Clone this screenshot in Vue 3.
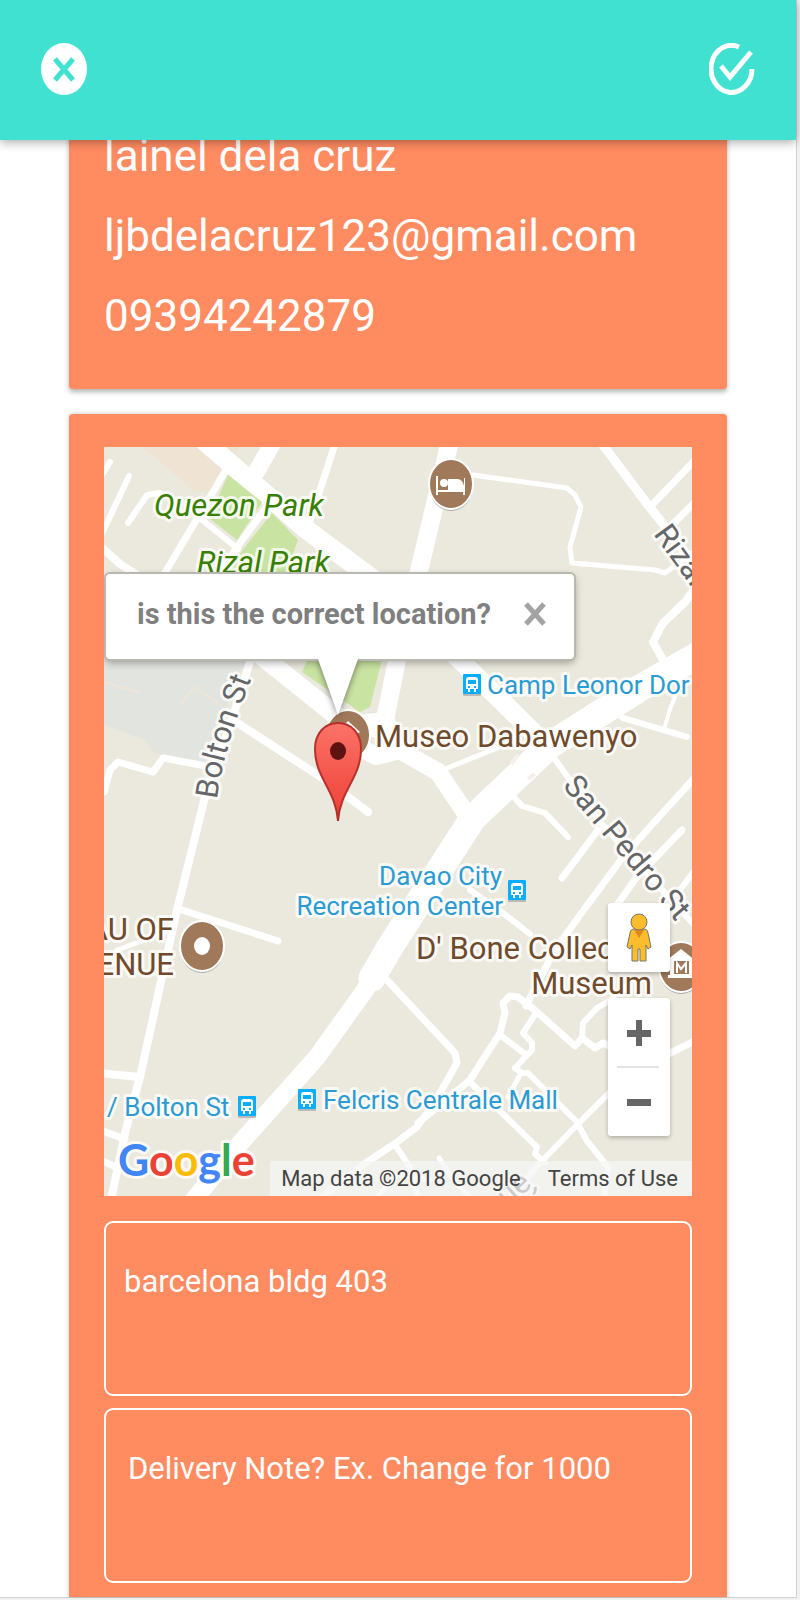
<script setup>
import { ref } from 'vue'

const address = ref('barcelona bldg 403')
const note = ref('')
const popupOpen = ref(true)

const customer = ['lainel dela cruz', 'ljbdelacruz123@gmail.com', '09394242879']

const roads = [
  { w: 19, d: 'M204 441 L267 495 L303 527 L373 579 L460 660 L538 737' },
  { w: 17, d: 'M274 441 L255 474' },
  { w: 7, d: 'M226 470 L163 576' },
  { w: 7, d: 'M268 505 L237 547 L216 578' },
  { w: 7, d: 'M336 441 L308 527' },
  { w: 6, d: 'M110 462 L100 478' },
  { w: 6, d: 'M129 476 L100 538' },
  { w: 6, d: 'M160 493 L147 495 L128 523' },
  { w: 6, d: 'M200 518 L238 549' },
  { w: 8, d: 'M100 546 L120 564 L142 578' },
  { w: 19, d: 'M258 653 L338 717 L352 740' },
  { w: 7, d: 'M104 792 L110 770 L118 762 L153 772 L163 758 L206 766' },
  { w: 8, d: 'M253 652 L232 720 L205 797 L177 910 L162 977 L140 1077 L125 1133 L111 1200' },
  { w: 8, d: 'M233 720 L330 783 L368 812' },
  { w: 18, d: 'M450 441 L420 567 L397 660 L383 730' },
  { w: 24, d: 'M352 728 L384 724' },
  { w: 18, d: 'M350 742 L376 756 L400 750 L438 772 L467 815' },
  { w: 14, d: 'M385 728 L398 748' },
  { w: 27, d: 'M700 654 L640 688 L550 745 L473 818 L433 880 L390 947 L372 978' },
  { w: 18, d: 'M380 965 L365 990 L317 1057 L243 1140 L192 1202' },
  { w: 5, d: 'M473 475 L567 488 L575 495 L581 507 L570 547 L572 563 L655 570 L665 573 L692 553' },
  { w: 9, d: 'M600 441 L648 505 L667 529 L692 562' },
  { w: 7, d: 'M698 457 L650 507' },
  { w: 7, d: 'M696 501 L668 529' },
  { w: 8, d: 'M697 585 L685 602 L663 623 L653 642 L662 658' },
  { w: 6, d: 'M611 709 L623 718 L687 737' },
  { w: 4, d: 'M675 697 L670 709 L665 726' },
  { w: 5, d: 'M445 769 L497 748' },
  { w: 6, d: 'M513 796 L522 806 L545 813 L568 837' },
  { w: 6, d: 'M552 755 L600 822 L652 879 L697 928' },
  { w: 7, d: 'M700 772 L667 808 L623 857 L580 915 L553 953 L526 1006' },
  { w: 7, d: 'M682 830 L636 878 L617 905' },
  { w: 7, d: 'M598 830 L562 878' },
  { w: 6, d: 'M698 866 L677 894' },
  { w: 6, d: 'M470 890 L503 913 L530 934' },
  { w: 7, d: 'M386 979 L455 1053 L457 1063 L433 1105 L417 1127 L393 1145 L367 1162 L318 1200' },
  { w: 6, d: 'M395 1145 L410 1167 L418 1198' },
  { w: 7, d: 'M418 1123 L470 1080 L500 1033 L505 1013 L503 1003 L510 996 L518 997 L537 1012 L575 1046 L582 1038 L595 1048 L603 1043 L618 1050' },
  { w: 6, d: 'M582 1040 L583 1023 L597 1008 L614 998' },
  { w: 6, d: 'M536 1013 L523 1033 L532 1043 L532 1050 L515 1068 L522 1073 L528 1073 L577 1122 L587 1141 L608 1167 L604 1198' },
  { w: 6, d: 'M500 1035 L525 1054' },
  { w: 5, d: 'M521 1073 L508 1097' },
  { w: 6, d: 'M469 1081 L537 1147 L535 1154 L545 1163' },
  { w: 6, d: 'M614 1088 L577 1125 L540 1163 L508 1200' },
  { w: 7, d: 'M664 1056 L697 1040' },
  { w: 8, d: 'M100 1073 L139 1077' },
  { w: 7, d: 'M100 1130 L125 1139' },
  { w: 7, d: 'M100 1160 L116 1167' },
  { w: 7, d: 'M182 910 L278 941' },
  { w: 5, d: 'M172 930 L117 950' },
  { w: 5, d: 'M439 1158 L450 1175 L470 1198' },
  { w: 5, d: 'M376 1198 L398 1174 L430 1180' }
]

const stops = [
  { x: 463, y: 674 },
  { x: 508, y: 880 },
  { x: 238, y: 1096 },
  { x: 298, y: 1089 }
]
</script>

<template>
  <div class="page">
    <header class="bar">
      <button class="icon-btn" type="button" aria-label="Close">
        <svg width="46" height="52" viewBox="0 0 46 52">
          <ellipse cx="23" cy="26" rx="23" ry="26" fill="#fff" />
          <path d="M14 16 L32 37 M32 16 L14 37" stroke="#40e1d1" stroke-width="5" />
        </svg>
      </button>
      <button class="icon-btn" type="button" aria-label="Confirm">
        <svg width="46" height="52" viewBox="0 0 46 52" fill="none" stroke="#fff" stroke-width="5">
          <path d="M30 4 A20.500 23.500 0 1 0 43 26" />
          <path d="M12 23 L21 34 L42 9" />
        </svg>
      </button>
    </header>

    <main class="content">
      <section class="card contact">
        <p v-for="line in customer" :key="line">{{ line }}</p>
      </section>

      <section class="card delivery">
        <div class="map">
          <svg class="tiles" viewBox="104 447 588 749" preserveAspectRatio="xMidYMid slice" role="img" aria-label="Map">
            <defs>
              <linearGradient id="pin" x1="0" y1="0" x2="0" y2="1">
                <stop offset="0" stop-color="#fc7267" />
                <stop offset="1" stop-color="#ee3f36" />
              </linearGradient>
              <path id="bolton" d="M217 799 Q224 745 257 665" />
            </defs>
            <rect x="104" y="447" width="588" height="749" fill="#ebe9de" />
            <path d="M143 447 H197 L223 472 L207 494 L193 490 Z M226 447 H240 L236 454 Z" fill="#efe4d4" />
            <path d="M104 655 H248 L240 672 L205 765 L163 755 L154 752 L145 740 L104 725 Z" fill="#e2e4df" />
            <path d="M104 682 L140 693 M180 705 L195 687 L222 706" stroke="#ede6d8" stroke-width="2" fill="none" />
            <g fill="none" stroke="#fff" stroke-linecap="round" stroke-linejoin="round">
              <path v-for="road in roads" :key="road.d" :d="road.d" :stroke-width="road.w" />
            </g>
            <g fill="#c9e3a2">
              <path d="M228 475 L262 502 L237 540 L209 518 Z" />
              <path d="M272 513 L298 540 L284 578 H226 L244 548 Z" />
              <path d="M310 655 H383 L370 707 L360 712 L302 672 Z" />
            </g>
            <path d="M511 764 L518 755 M528 779 L535 774" stroke="#f6f0ec" stroke-width="4" />

            <g v-for="stop in stops" :key="stop.x" :transform="`translate(${stop.x} ${stop.y})`">
              <rect y="1" width="18" height="21" rx="1" fill="#b9b9b5" />
              <rect width="18" height="20" rx="1" fill="#0aaeff" />
              <path d="M3 6 Q3 3 6 3 H12 Q15 3 15 6 V15 H13 V18 H11 V15 H7 V18 H5 V15 H3 Z" fill="#fff" />
              <path d="M5 6 H13 V10 H5 Z M5 12 H7 V14 H5 Z M11 12 H13 V14 H11 Z" fill="#0aaeff" />
            </g>

            <g stroke="#fff" stroke-width="2" fill="#a0785a">
              <ellipse cx="451" cy="486" rx="22" ry="25" fill="#aaa" stroke="none" />
              <ellipse cx="451" cy="484" rx="22" ry="25" />
              <ellipse cx="348" cy="735" rx="22" ry="25" />
              <ellipse cx="202" cy="948" rx="22" ry="25" fill="#aaa" stroke="none" />
              <ellipse cx="202" cy="946" rx="22" ry="25" />
              <ellipse cx="681" cy="969" rx="22" ry="25" fill="#aaa" stroke="none" />
              <ellipse cx="681" cy="967" rx="22" ry="25" />
            </g>
            <ellipse cx="202" cy="946" rx="8" ry="9" fill="#fff" />
            <path d="M436 476 H438 V490 H448 V479 H458 Q463 480 464 486 V478 H465 V495 H463 V492 H438 V495 H436 Z M440 483 a4 4 0 1 0 8 0 a4 4 0 1 0 -8 0" fill="#fff" />
            <path d="M334 735 L348 721 L360 732 L357 734 L348 727 Z" fill="#fff" />
            <path d="M667 960 L681 949 L695 960 V975 H697 V978 H668 V975 H670 V961 Z" fill="#fff" />
            <path d="M674 961 H689 V974 H674 Z" fill="#a0785a" />
            <path d="M677 973 V963 L681 969 L686 963 V973" fill="none" stroke="#fff" stroke-width="2" />

            <g class="label park">
              <text x="154" y="516">Quezon Park</text>
              <text x="197" y="573">Rizal Park</text>
            </g>
            <g class="label place">
              <text x="375" y="747">Museo Dabawenyo</text>
              <text x="416" y="959">D' Bone Collec</text>
              <text x="652" y="994" text-anchor="end">Museum</text>
              <text x="174" y="940" text-anchor="end">AU OF</text>
              <text x="174" y="975" text-anchor="end">ENUE</text>
            </g>
            <g class="label transit">
              <text x="487" y="694">Camp Leonor Dor</text>
              <text x="502" y="885" text-anchor="end">Davao City</text>
              <text x="503" y="915" text-anchor="end">Recreation Center</text>
              <text x="107" y="1116">/ Bolton St</text>
              <text x="323" y="1109">Felcris Centrale Mall</text>
            </g>
            <g class="label street">
              <text><textPath href="#bolton">Bolton St</textPath></text>
              <text transform="translate(562 786) rotate(50)">San Pedro St</text>
              <text transform="translate(653 534) rotate(54)">Rizal</text>
              <text transform="translate(508 1208) rotate(-42)">ue</text>
              <text x="532" y="1190">,</text>
            </g>
            <g class="label brand">
              <text x="118" y="1176"><tspan fill="#4285f4">G</tspan><tspan fill="#ea4335">o</tspan><tspan fill="#fbbc05">o</tspan><tspan fill="#4285f4">g</tspan><tspan fill="#34a853">l</tspan><tspan fill="#ea4335">e</tspan></text>
            </g>

            <path d="M338 821 C336 790 315 778 315 749 C315 733 325 723 338 723 C351 723 361 733 361 749 C361 778 340 790 338 821 Z" fill="url(#pin)" stroke="#b5322b" stroke-width="2" />
            <ellipse cx="338" cy="751" rx="8" ry="9" fill="#5f1212" />
          </svg>

          <div v-if="popupOpen" class="popup">
            <span>is this the correct location?</span>
            <button type="button" aria-label="Close popup" @click="popupOpen = false">
              <svg width="24" height="26" viewBox="0 0 24 26">
                <path d="M3 3 L21 23 M21 3 L3 23" stroke="#a3a3a3" stroke-width="5" />
              </svg>
            </button>
            <svg class="tail" width="48" height="60" viewBox="0 0 48 60">
              <path d="M4 0 L24 56 L44 0 Z" fill="#fff" />
            </svg>
          </div>

          <div class="controls">
            <button class="pegman" type="button" aria-label="Street View">
              <svg width="26" height="50" viewBox="0 0 26 50" fill="#fbbd2c" stroke="#77766f">
                <path d="M7 16 H19 Q22 17 22 20 L25 34 L22 36 L20 32 V48 H14 V36 H12 V48 H6 V32 L4 36 L1 34 L4 20 Q4 17 7 16 Z" />
                <path d="M8 17 H18 L13 25 Z" fill="#e0861f" stroke="none" />
                <ellipse cx="13" cy="9" rx="8" ry="8" />
              </svg>
            </button>
            <div class="zoom">
              <button type="button" aria-label="Zoom in">
                <svg width="24" height="26" viewBox="0 0 24 26"><path d="M9 0 H15 V10 H24 V17 H15 V26 H9 V17 H0 V10 H9 Z" fill="#666" /></svg>
              </button>
              <button type="button" aria-label="Zoom out">
                <svg width="24" height="26" viewBox="0 0 24 26"><path d="M0 10 H24 V17 H0 Z" fill="#666" /></svg>
              </button>
            </div>
          </div>

          <div class="credits">
            <span>Map data ©2018 Google</span>
            <a href="#terms">Terms of Use</a>
          </div>
        </div>

        <textarea v-model="address" class="field" aria-label="Address"></textarea>
        <textarea v-model="note" class="field note" aria-label="Delivery note" placeholder="Delivery Note? Ex. Change for 1000"></textarea>
      </section>
    </main>
  </div>
</template>

<style>
html {
  background: #f1f1f1;
}
body {
  margin: 0;
}
</style>

<style scoped>
.page {
  margin-right: 3px;
  border-right: 1px solid #d2d2d2;
  border-bottom: 1px solid #d2d2d2;
  background: #fff;
  font-family: Roboto, "Liberation Sans", sans-serif;
}
.page * {
  box-sizing: border-box;
}
button {
  padding: 0;
  border: 0;
  background: none;
  cursor: pointer;
}
svg {
  display: block;
}
.bar {
  position: sticky;
  top: 0;
  z-index: 2;
  display: flex;
  justify-content: space-between;
  height: 140px;
  padding: 43px 41px 45px;
  background: #40e1d1;
  box-shadow: 0 2px 10px rgba(0, 0, 0, 0.35);
}
.content {
  display: flex;
  flex-direction: column;
  gap: 25px;
  margin-top: -59px;
  padding: 0 69px;
}
.card {
  border-radius: 4px;
  background: #ff8b61;
  box-shadow: 0 3px 5px rgba(0, 0, 0, 0.3);
}
.contact {
  padding: 35px 35px 33px;
  color: #fff;
  font-size: 44px;
  line-height: 80px;
}
.contact p {
  margin: 0;
}
.delivery {
  display: flex;
  flex-direction: column;
  padding: 33px 35px 14px;
  border-radius: 4px 4px 0 0;
  box-shadow: 0 0 4px rgba(0, 0, 0, 0.25);
}
.map {
  position: relative;
  aspect-ratio: 588 / 749;
  margin-bottom: 25px;
  overflow: hidden;
}
.tiles {
  width: 100%;
  height: 100%;
}
.label {
  stroke: rgba(255, 255, 255, 0.75);
  stroke-width: 6px;
  stroke-linejoin: round;
  paint-order: stroke;
  font-size: 31px;
}
.park {
  fill: #388000;
  font-style: italic;
}
.place {
  fill: #6f4b2c;
}
.transit {
  fill: #2a9bd3;
  font-size: 26px;
}
.street {
  fill: #656668;
}
.brand {
  font-family: Lato, sans-serif;
  font-size: 43px;
  font-weight: 700;
}
.popup {
  position: absolute;
  top: 127px;
  left: 2px;
  display: flex;
  align-items: center;
  gap: 32px;
  height: 85px;
  padding: 0 27px 6px 31px;
  border-radius: 4px;
  background: #fff;
  box-shadow: 0 0 0 2px #b9b8b0, 0 3px 8px rgba(0, 0, 0, 0.4);
  color: #7f7f7f;
  font-size: 29px;
  font-weight: 700;
  white-space: nowrap;
}
.tail {
  position: absolute;
  top: 85px;
  left: 208px;
  filter: drop-shadow(0 2px 3px rgba(0, 0, 0, 0.45));
  clip-path: inset(0 -8px -8px -8px);
}
.controls {
  position: absolute;
  right: 22px;
  bottom: 60px;
  display: flex;
  flex-direction: column;
  gap: 26px;
  width: 62px;
}
.pegman,
.zoom {
  border-radius: 3px;
  background: #fff;
  box-shadow: 0 2px 4px rgba(0, 0, 0, 0.25);
}
.controls button {
  display: flex;
  align-items: center;
  justify-content: center;
  width: 100%;
  height: 69px;
}
.zoom button + button {
  position: relative;
}
.zoom button + button::before {
  content: "";
  position: absolute;
  top: -1px;
  left: 9px;
  right: 11px;
  height: 2px;
  background: #e3e3e3;
}
.credits {
  position: absolute;
  right: 0;
  bottom: 0;
  display: flex;
  gap: 27px;
  padding: 0 14px 0 11px;
  background: rgba(245, 245, 245, 0.7);
  color: #444;
  font-size: 22px;
  line-height: 35px;
}
.credits a {
  color: inherit;
  text-decoration: none;
}
.field {
  display: block;
  width: 100%;
  height: 175px;
  padding: 39px 18px;
  border: 2px solid #fff;
  border-radius: 9px;
  outline: 0;
  background: transparent;
  color: #fff;
  font-family: inherit;
  font-size: 31px;
  line-height: 40px;
  resize: none;
  overflow: hidden;
}
.field + .field {
  margin-top: 12px;
}
.note {
  padding: 39px 22px;
}
.field::placeholder {
  color: #fff;
  opacity: 1;
}
</style>
